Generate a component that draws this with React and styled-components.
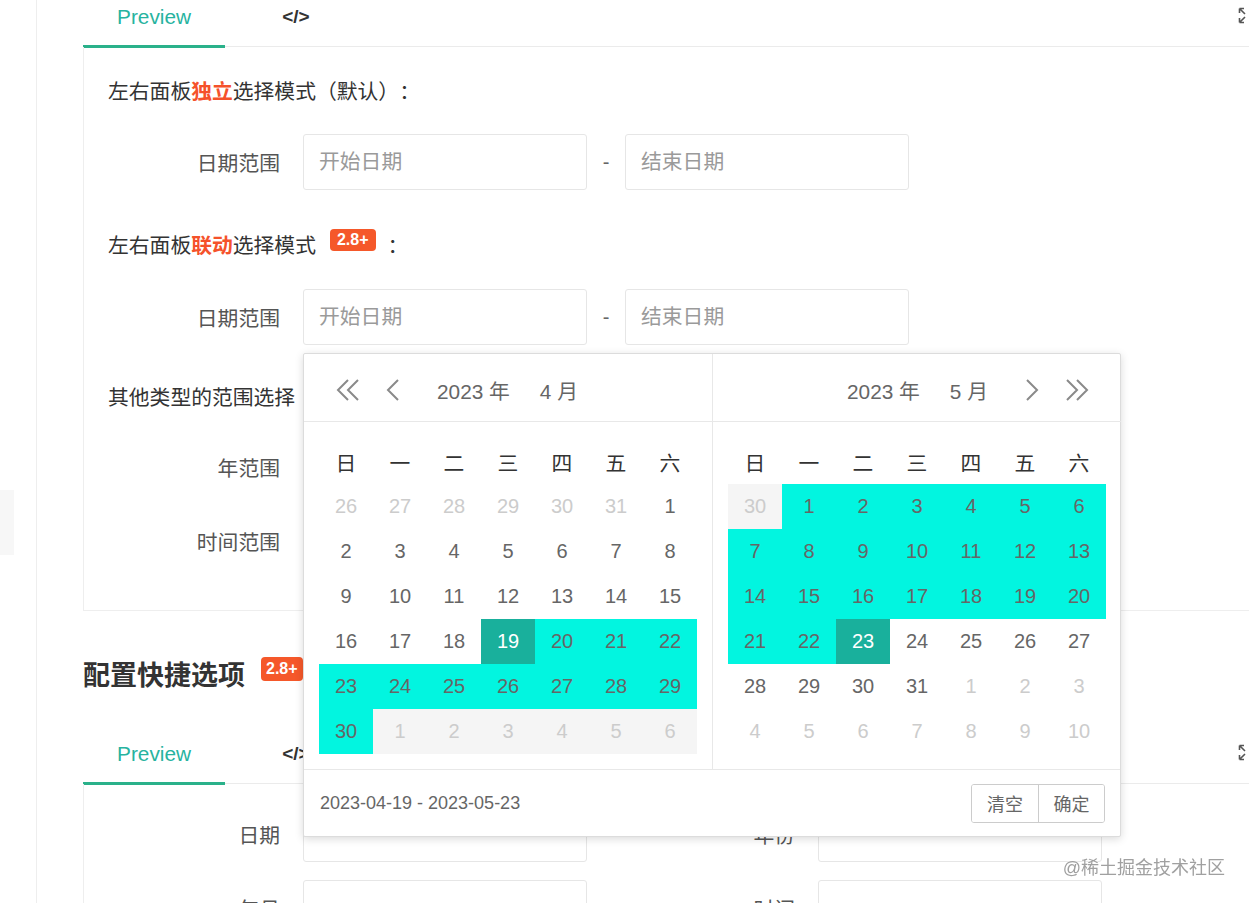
import styled, { createGlobalStyle } from 'styled-components';

const GlobalStyle = createGlobalStyle`
    html, body {
        margin: 0;
        padding: 0;
        background: #FFFFFF;
        overflow: hidden;
    }
    body {
        font-family: "Liberation Sans", "Noto Sans CJK SC", sans-serif;
        color: #333333;
        text-spacing-trim: space-all;
    }
    * {
        box-sizing: border-box;
    }
`

const range = (a, b) => Array.from({ length: b - a + 1 }, (_, i) => a + i);

const APRIL = [
    ...[26, 27, 28, 29, 30, 31].map(d => ({ d, t: 'out' })),
    ...range(1, 18).map(d => ({ d, t: 'in' })),
    { d: 19, t: 'edge' },
    ...range(20, 30).map(d => ({ d, t: 'range' })),
    ...range(1, 6).map(d => ({ d, t: 'ghost' })),
];

const MAY = [
    { d: 30, t: 'ghost' },
    ...range(1, 22).map(d => ({ d, t: 'range' })),
    { d: 23, t: 'edge' },
    ...range(24, 31).map(d => ({ d, t: 'in' })),
    ...range(1, 10).map(d => ({ d, t: 'out' })),
];

const WEEK = ['日', '一', '二', '三', '四', '五', '六'];

function ExpandIcon() {
    return (
        <svg width="9" height="17" viewBox="0 0 9 17" fill="none" stroke="#555" strokeWidth="1.6">
            <path d="M7 7 L1.5 1.5 M1.5 1.5 L1.5 6 M1.5 1.5 L6 1.5" />
            <path d="M7 10 L1.5 15.5 M1.5 15.5 L1.5 11 M1.5 15.5 L6 15.5" />
        </svg>
    );
}

function Chevron({ dir = 'left', double }) {
    const w = double ? 24 : 14;
    const flip = dir === 'right' ? `translate(${w} 0) scale(-1 1)` : undefined;
    return (
        <svg width={w} height="22" viewBox={`0 0 ${w} 22`} fill="none" stroke="#8a8a8a" strokeWidth="2">
            <g transform={flip}>
                <path d="M12 1 L2 11 L12 21" />
                {double && <path d="M22 1 L12 11 L22 21" />}
            </g>
        </svg>
    );
}

function Tabs() {
    return (
        <TabBar>
            <TabList>
                <Tab $active>Preview</Tab>
                <Tab $code>&lt;/&gt;</Tab>
            </TabList>
            <ExpandIcon />
        </TabBar>
    );
}

function Month({ days }) {
    return (
        <DayGrid>
            {WEEK.map(w => <WeekCell key={w}>{w}</WeekCell>)}
            {days.map((x, i) => <DayCell key={i} $type={x.t}>{x.d}</DayCell>)}
        </DayGrid>
    );
}

function RangePicker() {
    return (
        <Popup>
            <Panels>
                <Panel $left>
                    <PanelHeader>
                        <NavIcons>
                            <Chevron double />
                            <Chevron />
                        </NavIcons>
                        <HeaderTitle $ml={37}>
                            <span>2023 年</span>
                            <MonthText>4 月</MonthText>
                        </HeaderTitle>
                    </PanelHeader>
                    <Month days={APRIL} />
                </Panel>
                <Panel>
                    <PanelHeader $right>
                        <HeaderTitle $ml={0}>
                            <span>2023 年</span>
                            <MonthText>5 月</MonthText>
                        </HeaderTitle>
                        <NavIcons $right>
                            <Chevron dir="right" />
                            <Chevron dir="right" double />
                        </NavIcons>
                    </PanelHeader>
                    <Month days={MAY} />
                </Panel>
            </Panels>
            <PickerFooter>
                <span>2023-04-19 - 2023-05-23</span>
                <ButtonGroup>
                    <FooterButton>清空</FooterButton>
                    <FooterButton>确定</FooterButton>
                </ButtonGroup>
            </PickerFooter>
        </Popup>
    );
}

export default function App() {
    return (
        <>
        <GlobalStyle />
        <Page>
            <Sidebar>
                <SideHandle />
            </Sidebar>
            <Main>
                <Demo>
                    <Tabs />
                    <DemoBody $top={28} $bottom={41}>
                        <Title $mt={0}>左右面板<Strong>独立</Strong>选择模式（默认）：</Title>
                        <Row $mt={29}>
                            <Label>日期范围</Label>
                            <Input placeholder="开始日期" />
                            <Sep>-</Sep>
                            <Input placeholder="结束日期" />
                        </Row>

                        <Title $mt={39}>左右面板<Strong>联动</Strong>选择模式<Badge $ml={14}>2.8+</Badge><Colon>：</Colon></Title>
                        <Row $mt={30}>
                            <Label>日期范围</Label>
                            <Input placeholder="开始日期" />
                            <Sep>-</Sep>
                            <Input placeholder="结束日期" />
                            <RangePicker />
                        </Row>

                        <Title $mt={36}>其他类型的范围选择</Title>
                        <Row $mt={28}>
                            <Label>年范围</Label>
                            <Input placeholder="开始年份" />
                            <Sep>-</Sep>
                            <Input placeholder="结束年份" />
                        </Row>
                        <Row $mt={18}>
                            <Label>时间范围</Label>
                            <Input placeholder="开始时间" />
                            <Sep>-</Sep>
                            <Input placeholder="结束时间" />
                        </Row>
                    </DemoBody>
                </Demo>

                <Heading>配置快捷选项<Badge $ml={16} $big>2.8+</Badge></Heading>

                <Demo $mt={31}>
                    <Tabs />
                    <DemoBody $top={22} $bottom={30}>
                        <Row $mt={0} $gap={36}>
                            <Field>
                                <Label>日期</Label>
                                <Input />
                            </Field>
                            <Field>
                                <Label>年份</Label>
                                <Input />
                            </Field>
                        </Row>
                        <Row $mt={18} $gap={36}>
                            <Field>
                                <Label>年月</Label>
                                <Input />
                            </Field>
                            <Field>
                                <Label>时间</Label>
                                <Input />
                            </Field>
                        </Row>
                    </DemoBody>
                </Demo>
            </Main>
            <Watermark>@稀土掘金技术社区</Watermark>
        </Page>
        </>
    );
}

const Page = styled.div`
    display: flex;
    height: 100vh;
    overflow: hidden;
`

const Sidebar = styled.div`
    flex: 0 0 37px;
    border-right: 1px solid #EEEEEE;
    padding-top: 490px;
`

const SideHandle = styled.div`
    width: 14px;
    height: 65px;
    background: #F7F7F7;
`

const Main = styled.div`
    flex: 0 0 auto;
    padding-left: 46px;
    margin-top: -15px;
`

const Demo = styled.div`
    width: 1172px;
    margin-top: ${p => p.$mt || 0}px;
`

const TabBar = styled.div`
    display: flex;
    justify-content: space-between;
    align-items: center;
    height: 62px;
    padding-right: 8px;
    border-bottom: 1px solid #EBEBEB;
`

const TabList = styled.div`
    display: flex;
    height: 100%;
`

const Tab = styled.div`
    width: 142px;
    height: 63px;
    margin-bottom: -1px;
    display: flex;
    justify-content: center;
    align-items: center;
    font-size: ${p => p.$code ? '19px' : '20.8px'};
    font-weight: ${p => p.$code ? 700 : 400};
    color: ${p => p.$active ? '#27B3A0' : '#333333'};
    border-bottom: 3px solid ${p => p.$active ? '#2AB18A' : 'transparent'};
    padding-top: 3px;
`

const DemoBody = styled.div`
    position: relative;
    border-left: 1px solid #EEEEEE;
    border-right: 1px solid #EEEEEE;
    border-bottom: 1px solid #EEEEEE;
    padding: ${p => p.$top}px 24px ${p => p.$bottom}px;
`

const Title = styled.div`
    display: flex;
    align-items: center;
    height: 30px;
    margin-top: ${p => p.$mt}px;
    font-size: 20.8px;
    color: #333333;
`

const Strong = styled.b`
    color: #F5522B;
`

const Colon = styled.span`
    margin-left: 12px;
`

const Badge = styled.span`
    display: inline-flex;
    align-items: center;
    height: ${p => p.$big ? 24 : 22}px;
    padding: 0 ${p => p.$big ? 5 : 7}px;
    margin-left: ${p => p.$ml}px;
    margin-bottom: ${p => p.$big ? 8 : 9}px;
    border-radius: 4px;
    background: #F5582A;
    color: #FFFFFF;
    font-size: 16px;
    font-weight: 700;
    font-family: "Liberation Sans", Arial, sans-serif;
`

const Row = styled.div`
    position: relative;
    display: flex;
    align-items: center;
    gap: 0 ${p => p.$gap || 0}px;
    margin-top: ${p => p.$mt}px;
`

const Field = styled.div`
    display: flex;
    align-items: center;
`

const Label = styled.label`
    width: 172px;
    margin-right: 23px;
    text-align: right;
    font-size: 20.8px;
    color: #555555;
    flex-shrink: 0;
`

const Input = styled.input`
    width: 284px;
    height: 56px;
    padding: 0 15px;
    border: 1px solid #E6E6E6;
    border-radius: 3px;
    background: #FFFFFF;
    font-family: "Liberation Sans", "Noto Sans CJK SC", sans-serif;
    font-size: 20.8px;
    outline: none;

    &::placeholder {
        color: #9A9A9A;
    }
`

const Sep = styled.span`
    width: 38px;
    text-align: center;
    font-size: 20px;
    color: #666666;
`

const Heading = styled.h2`
    display: flex;
    align-items: center;
    height: 36px;
    margin: 44px 0 0;
    font-size: 27px;
    font-weight: 700;
    color: #333333;
`

const Popup = styled.div`
    position: absolute;
    left: 195px;
    top: 64px;
    z-index: 10;
    width: 818px;
    height: 484px;
    background: #FFFFFF;
    border: 1px solid #DCDCDC;
    border-radius: 2px;
    box-shadow: 0 2px 8px rgba(0, 0, 0, 0.15);
    display: flex;
    flex-direction: column;
`

const Panels = styled.div`
    display: flex;
`

const Panel = styled.div`
    flex: ${p => p.$left ? '0 0 409px' : '1'};
    border-right: ${p => p.$left ? '1px solid #E8E8E8' : 'none'};
`

const PanelHeader = styled.div`
    display: flex;
    align-items: center;
    justify-content: ${p => p.$right ? 'flex-end' : 'flex-start'};
    height: 68px;
    padding: ${p => p.$right ? '4px 32px 0 0' : '4px 0 0 32px'};
    border-bottom: 1px solid #E8E8E8;
    font-size: 20.8px;
    color: #666666;
`

const NavIcons = styled.div`
    display: flex;
    align-items: center;
    gap: 26px;
    margin-left: ${p => p.$right ? '37px' : '0'};
`

const HeaderTitle = styled.div`
    display: flex;
    margin-left: ${p => p.$ml}px;
`

const MonthText = styled.span`
    margin-left: 30px;
`

const DayGrid = styled.div`
    display: grid;
    grid-template-columns: repeat(7, 54px);
    grid-auto-rows: 45px;
    padding: 17px 15px 15px;
`

const WeekCell = styled.div`
    display: flex;
    justify-content: center;
    align-items: center;
    font-size: 20.8px;
    color: #333333;
`

const dayColors = {
    out: ['transparent', '#CCCCCC'],
    ghost: ['#F5F5F5', '#CCCCCC'],
    in: ['transparent', '#666666'],
    range: ['#02F5E0', '#666666'],
    edge: ['#19B09C', '#FFFFFF'],
}

const DayCell = styled.div`
    display: flex;
    justify-content: center;
    align-items: center;
    font-size: 20px;
    background: ${p => dayColors[p.$type][0]};
    color: ${p => dayColors[p.$type][1]};
`

const PickerFooter = styled.div`
    flex: 1;
    display: flex;
    justify-content: space-between;
    align-items: center;
    padding: 0 15px 0 16px;
    border-top: 1px solid #E8E8E8;
    font-size: 18px;
    color: #666666;
`

const ButtonGroup = styled.div`
    display: flex;
    border: 1px solid #CCCCCC;
    border-radius: 3px;
    overflow: hidden;
`

const FooterButton = styled.div`
    width: 66px;
    height: 37px;
    display: flex;
    justify-content: center;
    align-items: center;
    font-size: 18px;
    color: #666666;
    background: #FFFFFF;

    & + & {
        border-left: 1px solid #CCCCCC;
    }
`

const Watermark = styled.div`
    position: fixed;
    right: 24px;
    bottom: 24px;
    font-size: 18px;
    color: #A0A0A0;
    text-shadow: 0 0 2px #FFFFFF, 0 0 2px #FFFFFF;
    z-index: 20;
`
